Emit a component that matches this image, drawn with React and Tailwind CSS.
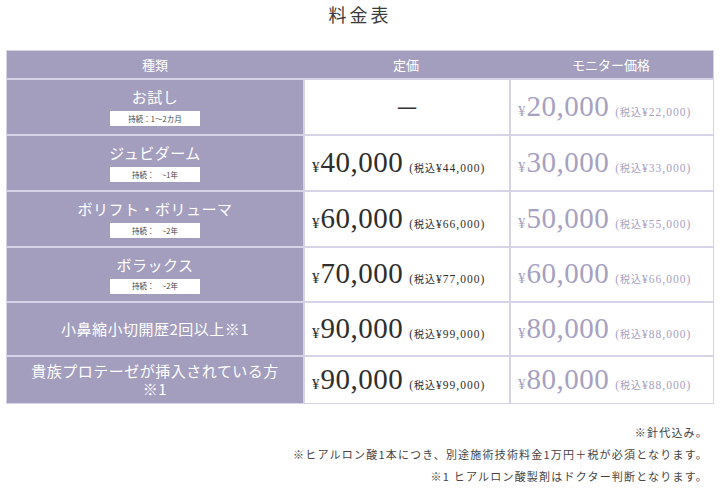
import React from "react";

const jp = "font-['Noto_Sans_CJK_JP','Noto_Sans',sans-serif]";
const serif = "font-['Liberation_Serif','Noto_Serif_CJK_JP','Noto_Sans_CJK_JP',serif]";

const rows = [
  { name: "お試し", badge: "持続：1〜2カ月", price: null, monitor: ["20,000", "22,000"], h: "h-[54px]" },
  { name: "ジュビダーム", badge: "持続：　~1年", price: ["40,000", "44,000"], monitor: ["30,000", "33,000"], h: "h-[54px]" },
  { name: "ボリフト・ボリューマ", badge: "持続：　~2年", price: ["60,000", "66,000"], monitor: ["50,000", "55,000"], h: "h-[54px]" },
  { name: "ボラックス", badge: "持続：　~2年", price: ["70,000", "77,000"], monitor: ["60,000", "66,000"], h: "h-[53px]" },
  { name: "小鼻縮小切開歴2回以上※1", price: ["90,000", "99,000"], monitor: ["80,000", "88,000"], h: "h-[52px]" },
  { name: "貴族プロテーゼが挿入されている方\n※1", price: ["90,000", "99,000"], monitor: ["80,000", "88,000"], h: "h-[46px]" },
];

function Price({ value, tax, color }) {
  return (
    <div className={`flex items-baseline pl-[7px] ${serif} ${color}`}>
      <span className="text-[15px]">¥</span>
      <span className="ml-px text-[29px] leading-none tracking-[0.5px]">{value}</span>
      <span className="ml-[6px] text-[11.5px] tracking-[1px]">
        (<span className={`${jp} text-[10px]`}>税込</span>¥{tax})
      </span>
    </div>
  );
}

export default function App() {
  return (
    <div className="w-[720px] h-[494px] bg-white overflow-hidden">
      <h2 className={`${jp} text-center text-[18px] leading-[28px] tracking-[3px] text-[#3a3a3a]`}>料金表</h2>

      <div className="mt-[22px] ml-[6px] w-[708px] bg-[#d6d3e6] p-px flex flex-col gap-[2px]">
        <div className={`grid grid-cols-[296px_206px_1fr] h-[27px] bg-[#a39ebe] text-white text-[13px] ${jp}`}>
          <div className="flex items-center justify-center">種類</div>
          <div className="flex items-center justify-center">定価</div>
          <div className="flex items-center justify-center">モニター価格</div>
        </div>

        {rows.map((r) => (
          <div key={r.name} className={`grid grid-cols-[296px_204px_1fr] gap-[2px] ${r.h}`}>
            <div className={`bg-[#a39ebe] flex flex-col items-center justify-center text-white ${jp}`}>
              <div className="text-[15px] leading-[18px] text-center whitespace-pre-line tracking-[0.5px]">{r.name}</div>
              {r.badge && (
                <div className="mt-[5px] w-[90px] h-[15px] bg-white flex items-center justify-center text-[7.5px] text-[#444]">
                  {r.badge}
                </div>
              )}
            </div>
            <div className="bg-white flex items-center">
              {r.price ? (
                <Price value={r.price[0]} tax={r.price[1]} color="text-[#2e2e2e]" />
              ) : (
                <div className="w-full text-center text-[20px] text-[#333]">—</div>
              )}
            </div>
            <div className="bg-white flex items-center">
              <Price value={r.monitor[0]} tax={r.monitor[1]} color="text-[#a6a1c2]" />
            </div>
          </div>
        ))}
      </div>

      <div className={`mt-[17px] pr-[12px] text-right text-[11px] leading-[22px] tracking-[1.2px] text-[#444] ${jp}`}>
        <p>※針代込み。</p>
        <p>※ヒアルロン酸1本につき、別途施術技術料金1万円＋税が必須となります。</p>
        <p>※1 ヒアルロン酸製剤はドクター判断となります。</p>
      </div>
    </div>
  );
}
